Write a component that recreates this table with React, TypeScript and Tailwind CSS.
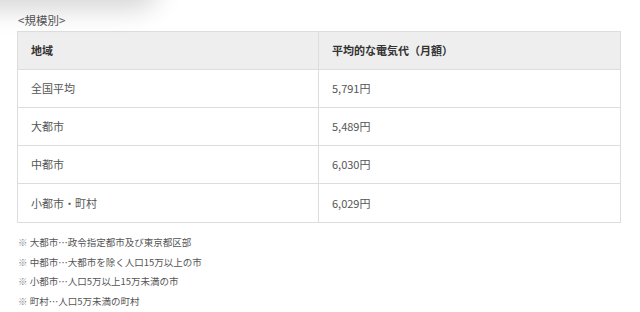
const rows = [
  { area: "全国平均", cost: "5,791円" },
  { area: "大都市", cost: "5,489円" },
  { area: "中都市", cost: "6,030円" },
  { area: "小都市・町村", cost: "6,029円" },
];

const notes = [
  "大都市…政令指定都市及び東京都区部",
  "中都市…大都市を除く人口15万以上の市",
  "小都市…人口5万以上15万未満の市",
  "町村…人口5万未満の町村",
];

export default function App() {
  return (
    <main
      className="relative min-h-screen overflow-hidden bg-white pt-[13px] pl-[17px] text-[#555]"
      style={{ fontFamily: '"Noto Sans CJK JP", "Noto Sans", sans-serif' }}
    >
      <div className="pointer-events-none absolute -top-[34px] -left-[40px] h-[34px] w-[190px] rounded-full bg-[#ccc] shadow-[0_0_26px_10px_rgba(0,0,0,0.16)]" />

      <p className="pl-px text-[11.5px] leading-[15px] mb-[3px]">&lt;規模別&gt;</p>

      <div className="w-[604px] border border-[#ddd] text-[11px]">
        <div className="flex h-[37px] items-center bg-[#eee] font-bold text-[#333]">
          <div className="flex h-full w-[301px] items-center border-r border-[#ddd] px-[13px]">地域</div>
          <div className="px-[13px]">平均的な電気代（月額）</div>
        </div>
        {rows.map((r, i) => (
          <div
            key={r.area}
            className={`flex items-center border-t border-[#ddd] ${i === rows.length - 1 ? "h-[39px]" : "h-[38px]"}`}
          >
            <div className="flex h-full w-[301px] items-center border-r border-[#ddd] px-[13px]">{r.area}</div>
            <div className="px-[13px]">{r.cost}</div>
          </div>
        ))}
      </div>

      <ul className="mt-[10px] pl-px text-[9.5px] leading-[19.5px]">
        {notes.map((n) => (
          <li key={n}>
            <span className="text-[#888]">※</span> {n}
          </li>
        ))}
      </ul>
    </main>
  );
}
